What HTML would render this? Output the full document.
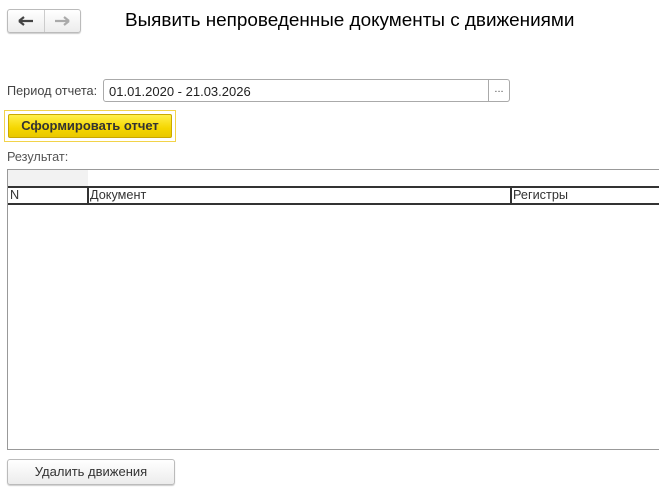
<!DOCTYPE html>
<html><head><meta charset="utf-8"><style>
body{margin:0;width:659px;height:498px;background:#fff;font-family:"Liberation Sans",Arial,sans-serif;position:relative;overflow:hidden;color:#333}
.abs{position:absolute}
.nav{left:7px;top:9px;width:72px;height:22px;border:1px solid #bbb;border-radius:3px;background:linear-gradient(#fff,#ececec);box-shadow:0 1px 1px #ccc}
.nav .sep{position:absolute;left:36px;top:0;width:1px;height:22px;background:#ccc}
.title{left:125px;top:10px;font-size:18.9px;color:#000}
.lbl{font-size:12.7px;color:#444}
.inp{left:103px;top:79px;width:407px;height:23px;border:1px solid #aaa;border-radius:3px;box-sizing:border-box}
.inp span{position:absolute;left:5px;top:4px;font-size:13px;color:#222}
.inp .dots{position:absolute;right:0;top:0;width:20px;height:21px;border-left:1px solid #aaa;font-size:11px;text-align:center;line-height:19px;color:#555}
.yb{left:4px;top:110px;width:172px;height:32px;border:1px solid #f2d34a;box-sizing:border-box}
.yb div{position:absolute;left:3px;top:3px;width:164px;height:24px;border:1px solid #c9a800;border-radius:2px;background:linear-gradient(#fff04a,#f5d600 60%,#e9c800);box-sizing:border-box;text-align:center;line-height:22px;font-size:13px;font-weight:bold;color:#333}
.tbl{left:7px;top:169px;width:660px;height:281px;border:1px solid #999;box-sizing:border-box}
.btn{left:7px;top:459px;width:168px;height:26px;border:1px solid #bbb;border-radius:3px;background:linear-gradient(#fff,#ececec);box-shadow:0 1px 1px #ccc;box-sizing:border-box;text-align:center;line-height:24px;font-size:13px;color:#333}
.th{font-size:12.7px;color:#333}
</style></head><body>
<div class="abs nav"><div class="sep"></div>
<svg class="abs" style="left:10px;top:6px" width="16" height="10"><path d="M1 5H15M1 5L6 1M1 5L6 9" stroke="#444" stroke-width="2.2" fill="none"/></svg>
<svg class="abs" style="left:46px;top:6px" width="16" height="10"><path d="M1 5H15M15 5L10 1M15 5L10 9" stroke="#aaa" stroke-width="2.2" fill="none"/></svg>
</div>
<div class="abs title">Выявить непроведенные документы с движениями</div>
<div class="abs lbl" style="left:7px;top:84px">Период отчета:</div>
<div class="abs inp"><span>01.01.2020 - 21.03.2026</span><div class="dots">...</div></div>
<div class="abs yb"><div>Сформировать отчет</div></div>
<div class="abs lbl" style="left:7px;top:150px;color:#555">Результат:</div>
<div class="abs tbl">
 <div class="abs" style="left:0;top:0;width:80px;height:16px;background:#f2f2f2"></div>
 <div class="abs" style="left:0;top:16px;width:660px;height:2px;background:#333"></div>
 <div class="abs" style="left:0;top:33px;width:660px;height:2px;background:#333"></div>
 <div class="abs" style="left:79px;top:16px;width:2px;height:19px;background:#333"></div>
 <div class="abs" style="left:502px;top:16px;width:2px;height:19px;background:#333"></div>
 <div class="abs th" style="left:2px;top:18px">N</div>
 <div class="abs th" style="left:82px;top:18px">Документ</div>
 <div class="abs th" style="left:505px;top:18px">Регистры</div>
</div>
<div class="abs btn">Удалить движения</div>
</body></html>
